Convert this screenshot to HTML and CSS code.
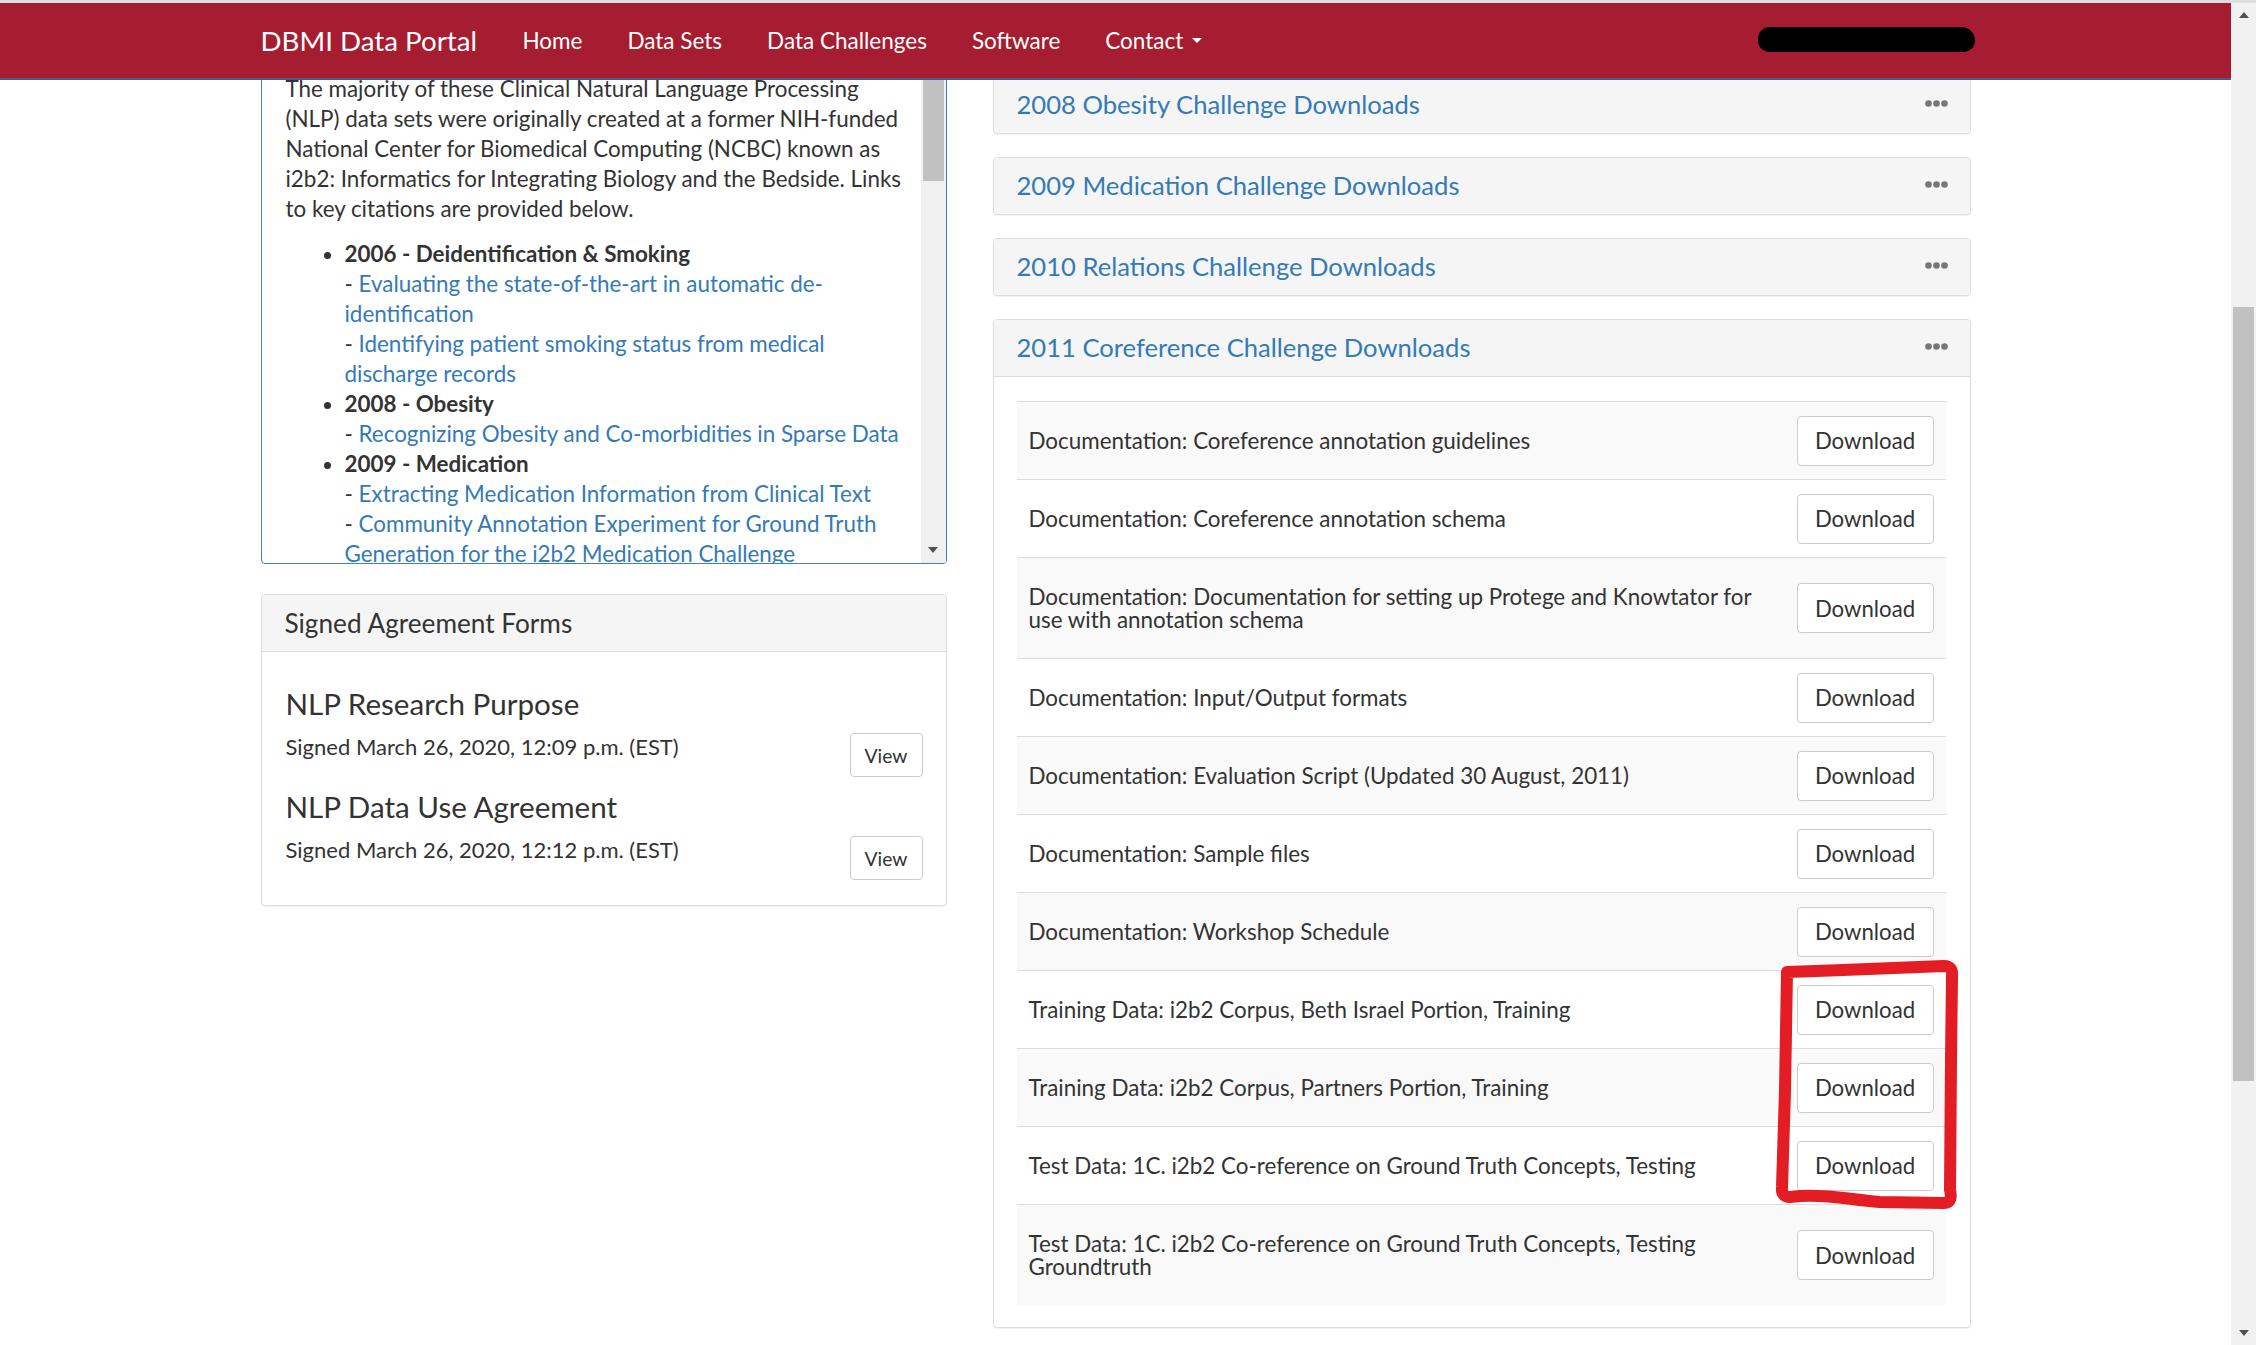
FILE: index.html
```html
<!DOCTYPE html>
<html lang="en">
<head>
<meta charset="utf-8">
<title>DBMI Data Portal</title>
<link rel="stylesheet" href="styles.css">
</head>
<body>
<div class="chrome-top"></div>
<div class="window">
  <div class="viewport">
    <header class="navbar">
      <div class="nav-inner">
        <span class="brand">DBMI Data Portal</span>
        <a class="nav-link">Home</a>
        <a class="nav-link">Data Sets</a>
        <a class="nav-link">Data Challenges</a>
        <a class="nav-link">Software</a>
        <a class="nav-link">Contact<span class="caret"></span></a>
        <span class="redact"></span>
      </div>
    </header>
    <main class="page">
      <div class="container">
        <div class="col-left">
          <div class="descbox">
            <div class="desc-text">
              <p>The majority of these Clinical Natural Language Processing<br>(NLP) data sets were originally created at a former NIH-funded<br>National Center for Biomedical Computing (NCBC) known as<br>i2b2: Informatics for Integrating Biology and the Bedside. Links<br>to key citations are provided below.</p>
              <ul>
                <li><b>2006 - Deidentification &amp; Smoking</b><br>- <a>Evaluating the state-of-the-art in automatic de-<br>identification</a><br>- <a>Identifying patient smoking status from medical<br>discharge records</a></li>
                <li><b>2008 - Obesity</b><br>- <a>Recognizing Obesity and Co-morbidities in Sparse Data</a></li>
                <li><b>2009 - Medication</b><br>- <a>Extracting Medication Information from Clinical Text</a><br>- <a>Community Annotation Experiment for Ground Truth<br>Generation for the i2b2 Medication Challenge</a></li>
              </ul>
            </div>
            <div class="inner-scroll">
              <div class="inner-thumb"></div>
              <span class="arrow-down"></span>
            </div>
          </div>

          <div class="panel open">
            <div class="panel-heading left-heading">Signed Agreement Forms</div>
            <div class="agree-body">
              <div class="agreement">
                <div class="agree-info">
                  <h4>NLP Research Purpose</h4>
                  <p>Signed March 26, 2020, 12:09 p.m. (EST)</p>
                </div>
                <button class="btn btn-view">View</button>
              </div>
              <div class="agreement">
                <div class="agree-info">
                  <h4>NLP Data Use Agreement</h4>
                  <p>Signed March 26, 2020, 12:12 p.m. (EST)</p>
                </div>
                <button class="btn btn-view">View</button>
              </div>
            </div>
          </div>
        </div>

        <div class="col-right">
          <div class="panel">
            <div class="panel-heading"><a class="title">2008 Obesity Challenge Downloads</a><svg class="dots" width="23" height="7" viewBox="0 0 23 7"><circle cx="3.5" cy="3.5" r="3.3"/><circle cx="11.5" cy="3.5" r="3.3"/><circle cx="19.5" cy="3.5" r="3.3"/></svg></div>
          </div>
          <div class="panel">
            <div class="panel-heading"><a class="title">2009 Medication Challenge Downloads</a><svg class="dots" width="23" height="7" viewBox="0 0 23 7"><circle cx="3.5" cy="3.5" r="3.3"/><circle cx="11.5" cy="3.5" r="3.3"/><circle cx="19.5" cy="3.5" r="3.3"/></svg></div>
          </div>
          <div class="panel">
            <div class="panel-heading"><a class="title">2010 Relations Challenge Downloads</a><svg class="dots" width="23" height="7" viewBox="0 0 23 7"><circle cx="3.5" cy="3.5" r="3.3"/><circle cx="11.5" cy="3.5" r="3.3"/><circle cx="19.5" cy="3.5" r="3.3"/></svg></div>
          </div>
          <div class="panel open">
            <div class="panel-heading"><a class="title">2011 Coreference Challenge Downloads</a><svg class="dots" width="23" height="7" viewBox="0 0 23 7"><circle cx="3.5" cy="3.5" r="3.3"/><circle cx="11.5" cy="3.5" r="3.3"/><circle cx="19.5" cy="3.5" r="3.3"/></svg></div>
            <div class="dl-body">
              <div class="dl-row"><div class="dl-text">Documentation: Coreference annotation guidelines</div><div class="dl-cell"><button class="btn btn-dl">Download</button></div></div>
              <div class="dl-row"><div class="dl-text">Documentation: Coreference annotation schema</div><div class="dl-cell"><button class="btn btn-dl">Download</button></div></div>
              <div class="dl-row"><div class="dl-text">Documentation: Documentation for setting up Protege and Knowtator for<br>use with annotation schema</div><div class="dl-cell"><button class="btn btn-dl">Download</button></div></div>
              <div class="dl-row"><div class="dl-text">Documentation: Input/Output formats</div><div class="dl-cell"><button class="btn btn-dl">Download</button></div></div>
              <div class="dl-row"><div class="dl-text">Documentation: Evaluation Script (Updated 30 August, 2011)</div><div class="dl-cell"><button class="btn btn-dl">Download</button></div></div>
              <div class="dl-row"><div class="dl-text">Documentation: Sample files</div><div class="dl-cell"><button class="btn btn-dl">Download</button></div></div>
              <div class="dl-row"><div class="dl-text">Documentation: Workshop Schedule</div><div class="dl-cell"><button class="btn btn-dl">Download</button></div></div>
              <div class="dl-row"><div class="dl-text">Training Data: i2b2 Corpus, Beth Israel Portion, Training</div><div class="dl-cell"><button class="btn btn-dl">Download</button></div></div>
              <div class="dl-row"><div class="dl-text">Training Data: i2b2 Corpus, Partners Portion, Training</div><div class="dl-cell"><button class="btn btn-dl">Download</button></div></div>
              <div class="dl-row"><div class="dl-text">Test Data: 1C. i2b2 Co-reference on Ground Truth Concepts, Testing</div><div class="dl-cell"><button class="btn btn-dl">Download</button></div></div>
              <div class="dl-row"><div class="dl-text">Test Data: 1C. i2b2 Co-reference on Ground Truth Concepts, Testing<br>Groundtruth</div><div class="dl-cell"><button class="btn btn-dl">Download</button></div></div>
            </div>
          </div>
        </div>
      </div>
    </main>
  </div>
  <div class="scrollbar">
    <span class="arrow-up"></span>
    <div class="thumb"></div>
    <span class="arrow-down main-down"></span>
  </div>
</div>
<svg class="annotation" width="2256" height="1345" viewBox="0 0 2256 1345">
  <path d="M1787,972 C1840,970 1900,968 1944,966 Q1953,966 1952,976 L1951,1060 L1950,1190 Q1953,1203 1944,1203 L1880,1202 C1850,1200 1830,1194 1800,1196 L1790,1197 Q1781,1197 1782,1187 L1785,1090 L1787,972 Z"/>
</svg>
</body>
</html>
```

FILE: styles.css
```css
html, body {
  margin: 0;
  padding: 0;
}

body {
  width: 2256px;
  height: 1345px;
  overflow: hidden;
  background: #ffffff;
  color: #333333;
  font-family: Lato, "Helvetica Neue", "Liberation Sans", Arial, sans-serif;
}

a {
  color: #337ab7;
  text-decoration: none;
}

.chrome-top {
  height: 3px;
  background: #dedede;
}

.window {
  display: flex;
  height: 1342px;
}

.viewport {
  flex: 1;
  min-width: 0;
  display: flex;
  flex-direction: column;
}

/* navbar */
.navbar {
  flex: none;
  height: 75px;
  background: #a61c30;
  border-bottom: 2px solid #475c8c;
}

.nav-inner {
  width: 1710px;
  height: 100%;
  margin: 0 auto;
  display: flex;
  align-items: center;
}

.brand {
  font-size: 27.7px;
  color: #ffffff;
  padding-right: 23px;
}

.nav-link {
  font-size: 22.5px;
  color: #ffffff;
  padding: 0 22.5px;
  display: flex;
  align-items: center;
}

.caret {
  display: inline-block;
  width: 0;
  height: 0;
  margin-left: 9px;
  border-top: 5px solid #ffffff;
  border-left: 5px solid transparent;
  border-right: 5px solid transparent;
}

.redact {
  margin-left: auto;
  margin-right: -4px;
  margin-top: -2px;
  width: 217px;
  height: 25px;
  background: #000000;
  border-radius: 12px 14px 12px 12px;
}

/* page */
.page {
  flex: 1;
  overflow: hidden;
}

.container {
  width: 1710px;
  margin: 0 auto;
  display: flex;
  align-items: flex-start;
  gap: 46px;
}

.col-left {
  width: 686px;
  flex: none;
}

.col-right {
  width: 978px;
  flex: none;
  margin-top: -4px;
}

/* scrolled description box */
.descbox {
  box-sizing: border-box;
  margin-top: -20px;
  margin-bottom: 30px;
  height: 504px;
  border: 1px solid #3d7fc0;
  border-radius: 4px;
  display: flex;
  overflow: hidden;
}

.desc-text {
  flex: 1;
  min-width: 0;
  padding: 13px 20px 0 24px;
  font-size: 22.4px;
  line-height: 30px;
  white-space: nowrap;
  overflow: hidden;
}

.desc-text p {
  margin: 0 0 15px;
}

.desc-text ul {
  margin: 0;
  padding-left: 59px;
}

.desc-text b {
  font-weight: 700;
}

.inner-scroll {
  flex: none;
  width: 25px;
  background: #f0f0f0;
  display: flex;
  flex-direction: column;
  align-items: center;
}

.inner-thumb {
  width: 21px;
  height: 120px;
  background: #c1c1c1;
}

.arrow-down {
  width: 0;
  height: 0;
  margin-top: auto;
  margin-bottom: 10px;
  border-top: 6px solid #505050;
  border-left: 5.5px solid transparent;
  border-right: 5.5px solid transparent;
}

.arrow-up {
  width: 0;
  height: 0;
  margin-top: 9px;
  border-bottom: 6px solid #505050;
  border-left: 5.5px solid transparent;
  border-right: 5.5px solid transparent;
}

/* panels */
.panel {
  background: #ffffff;
  border: 1px solid #dddddd;
  border-radius: 4px;
  box-shadow: 0 1px 1px rgba(0, 0, 0, 0.06);
  margin-bottom: 23px;
}

.panel-heading {
  height: 56px;
  box-sizing: border-box;
  padding: 0 22px 0 23px;
  background: #f5f5f5;
  border-radius: 3px 3px 0 0;
  display: flex;
  align-items: center;
  justify-content: space-between;
  font-size: 25.6px;
  color: #333333;
}

.left-heading {
  font-size: 26.2px;
}

.panel:not(.open) .panel-heading {
  border-radius: 3px;
}

.panel.open .panel-heading {
  height: 57px;
  border-bottom: 1px solid #dddddd;
}

.title {
  color: #337ab7;
  margin-top: -2px;
}

.dots {
  fill: #777777;
  margin-top: -3px;
}

/* agreements */
.agree-body {
  padding: 22px 23px 25px 24px;
}

.agreement {
  display: flex;
  align-items: flex-end;
  justify-content: space-between;
}

.agree-info h4 {
  font-size: 29.6px;
  font-weight: 400;
  line-height: 29px;
  margin: 15px 0 14px;
}

.agree-info p {
  margin: 0 0 15px;
  font-size: 22px;
  line-height: 30px;
}

.btn {
  font-family: Lato, "Helvetica Neue", "Liberation Sans", Arial, sans-serif;
  background: #ffffff;
  color: #333333;
  border: 1px solid #cccccc;
  border-radius: 4px;
  padding: 0;
  box-sizing: border-box;
}

.btn-view {
  width: 73px;
  height: 44px;
  font-size: 19.3px;
}

/* downloads */
.dl-body {
  padding: 24px 24px 22px 23px;
}

.dl-row {
  display: flex;
  align-items: center;
  border-top: 1px solid #dddddd;
}

.dl-row:nth-child(odd) {
  background: #f9f9f9;
}

.dl-text {
  flex: 1;
  padding: 27px 12px;
  font-size: 22.4px;
  line-height: 23px;
}

.dl-cell {
  flex: none;
  padding: 0 12px;
}

.btn-dl {
  width: 137px;
  height: 50px;
  font-size: 22.2px;
}

/* window scrollbar */
.scrollbar {
  flex: none;
  width: 25px;
  background: #f1f1f1;
  display: flex;
  flex-direction: column;
  align-items: center;
}

.thumb {
  width: 21px;
  height: 774px;
  margin-top: 289px;
  background: #c1c1c1;
}

.main-down {
  margin-bottom: 9px;
}

/* hand-drawn annotation */
.annotation {
  position: absolute;
  left: 0;
  top: 0;
  pointer-events: none;
  fill: none;
  stroke: #e41c23;
  stroke-width: 12;
  stroke-linejoin: round;
  stroke-linecap: round;
}
```
